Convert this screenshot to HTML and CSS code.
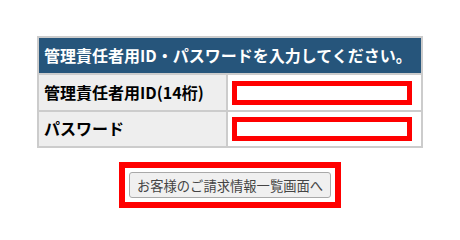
FILE: index.html
```html
<!DOCTYPE html>
<html lang="ja">
<head>
  <meta charset="UTF-8" />
  <title>ログイン</title>
  <link rel="stylesheet" href="styles.css">
</head>
<body>
  <div class="container">
    <table class="login-table">
      <tr>
        <th colspan="2" class="title">管理責任者用ID・パスワードを入力してください。</th>
      </tr>
      <tr class="row-id">
        <td class="label">管理責任者用ID(14桁)</td>
        <td class="field"><input type="text" name="admin_id" class="mark"></td>
      </tr>
      <tr class="row-pw">
        <td class="label">パスワード</td>
        <td class="field"><input type="password" name="password" class="mark"></td>
      </tr>
    </table>

    <div class="actions">
      <div class="mark-box">
        <button type="button">お客様のご請求情報一覧画面へ</button>
      </div>
    </div>
  </div>
</body>
</html>
```

FILE: styles.css
```css
body {
  margin: 0;
  background: #fff;
  font-family: "Noto Sans CJK JP", "Noto Sans", sans-serif;
}
.container {
  padding-top: 36px;
}
.login-table {
  margin: 0 auto;
  width: 386px;
  border-collapse: collapse;
  border: 2px solid #cccccc;
}
.login-table th,
.login-table td {
  border: 2px solid #cccccc;
  padding: 0 0 0 5px;
  text-align: left;
  line-height: 1.2;
}
.title {
  height: 35px;
  background-color: #26557b;
  color: #fff;
  font-size: 16px;
  font-weight: bold;
  white-space: nowrap;
}
.row-id td {
  height: 35px;
}
.row-pw td {
  height: 34px;
}
.label {
  width: 182px;
  background-color: #eeeeee;
  color: #000;
  font-size: 16px;
  font-weight: bold;
}
.field {
  background: #fff;
}
.field input {
  display: block;
  box-sizing: border-box;
  width: 180px;
  height: 24px;
  margin: 0 0 0 -1px;
  padding: 0;
  border: 5px solid #ff0000;
  outline: none;
}
.actions {
  margin-top: 14px;
  text-align: center;
}
.mark-box {
  display: inline-block;
  border: 6px solid #ff0000;
  padding: 4px;
}
button {
  display: block;
  box-sizing: border-box;
  width: 202px;
  height: 26px;
  padding: 0;
  background-color: #f0f0f0;
  border: 1px solid #a9a9a9;
  border-radius: 3px;
  color: #444;
  font-family: "Noto Sans CJK JP", sans-serif;
  font-size: 13.3px;
  cursor: pointer;
}
```
